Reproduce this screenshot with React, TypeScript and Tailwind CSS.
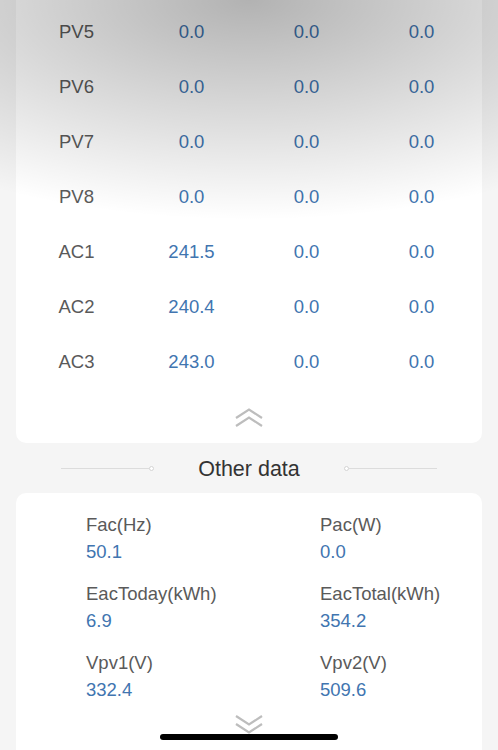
import React from "react";

const rows = [
  ["PV5", "0.0", "0.0", "0.0"],
  ["PV6", "0.0", "0.0", "0.0"],
  ["PV7", "0.0", "0.0", "0.0"],
  ["PV8", "0.0", "0.0", "0.0"],
  ["AC1", "241.5", "0.0", "0.0"],
  ["AC2", "240.4", "0.0", "0.0"],
  ["AC3", "243.0", "0.0", "0.0"],
];

const items = [
  ["Fac(Hz)", "50.1"],
  ["Pac(W)", "0.0"],
  ["EacToday(kWh)", "6.9"],
  ["EacTotal(kWh)", "354.2"],
  ["Vpv1(V)", "332.4"],
  ["Vpv2(V)", "509.6"],
];

function Chevrons({ up }: { up: boolean }) {
  return (
    <svg width="30" height="21" viewBox="0 0 30 21" fill="none">
      <g transform={up ? undefined : "translate(0 21) scale(1 -1)"} stroke="#bdbdbd" strokeWidth="2.2" strokeLinecap="butt">
        <path d="M2 11 L15 2.5 L28 11" />
        <path d="M2 19 L15 10.5 L28 19" />
      </g>
    </svg>
  );
}

export default function App() {
  return (
    <div
      className="relative w-[498px] h-[750px] overflow-hidden bg-[#f5f5f5]"
      style={{ fontFamily: '"Liberation Sans", Arial, sans-serif' }}
    >
      <div className="mx-[16px] bg-white rounded-b-[10px] px-[3px] pt-[4px]">
        {rows.map((r) => (
          <div key={r[0]} className="grid grid-cols-4 h-[55px] items-center text-[18.5px]">
            {r.map((c, i) => (
              <div key={i} className={"text-center " + (i === 0 ? "text-[#5a5a5a]" : "text-[#4175b0]")}>
                {c}
              </div>
            ))}
          </div>
        ))}
        <div className="flex justify-center pt-[18px] pb-[15px]">
          <Chevrons up />
        </div>
      </div>

      <div className="h-[50px] flex items-center justify-center">
        <div className="flex items-center w-[93px]">
          <div className="h-[1px] flex-1 bg-[#dcdcdc]" />
          <div className="w-[5px] h-[5px] rounded-full border border-[#d4d4d4] bg-white" />
        </div>
        <div className="w-[190px] text-center text-[21.5px] text-[#333333] pt-[2px]">Other data</div>
        <div className="flex items-center w-[93px]">
          <div className="w-[5px] h-[5px] rounded-full border border-[#d4d4d4] bg-white" />
          <div className="h-[1px] flex-1 bg-[#dcdcdc]" />
        </div>
      </div>

      <div className="mx-[16px] bg-white rounded-t-[10px] h-[300px] pl-[70px] pt-[18px]">
        <div className="grid grid-cols-[234px_1fr] gap-y-[15px]">
          {items.map(([l, v]) => (
            <div key={l} className="text-[18.5px]">
              <div className="leading-[27px] text-[#5a5a5a]">{l}</div>
              <div className="leading-[27px] text-[#4175b0]">{v}</div>
            </div>
          ))}
        </div>
        <div className="flex justify-center pt-[11px] pr-[70px]">
          <Chevrons up={false} />
        </div>
      </div>

      <div className="pointer-events-none absolute inset-x-0 top-0 h-[240px] bg-[radial-gradient(ellipse_498px_220px_at_50%_0%,rgba(0,0,0,0.3),rgba(0,0,0,0))]" />
      <div className="absolute left-[160px] top-[734px] w-[178px] h-[6px] rounded-full bg-black" />
    </div>
  );
}
